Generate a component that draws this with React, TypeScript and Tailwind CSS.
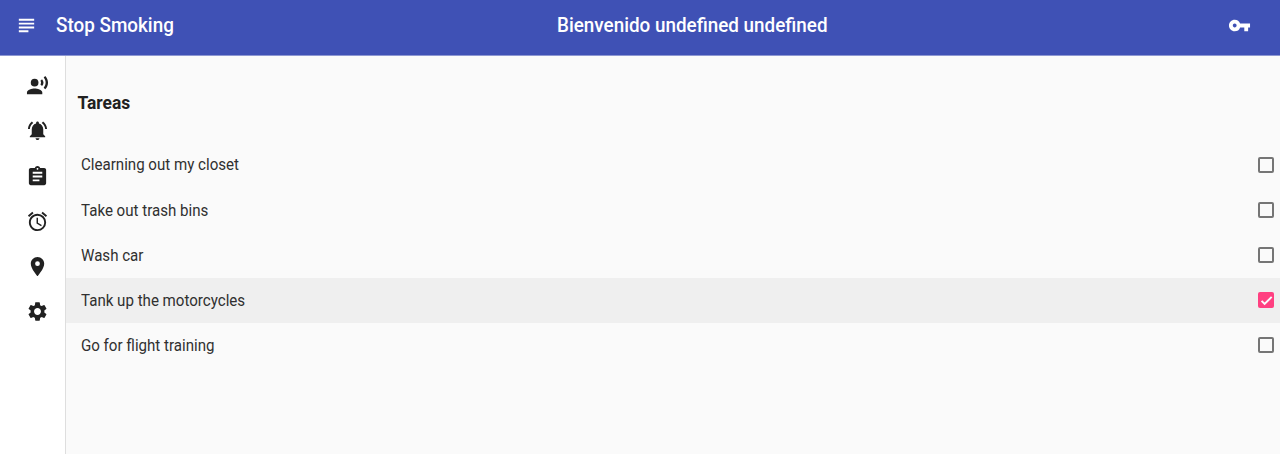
import { MdSubject, MdVpnKey, MdRecordVoiceOver, MdNotificationsActive, MdAssignment, MdAccessAlarm, MdLocationOn, MdSettings } from "react-icons/md";

const navIcons = [MdRecordVoiceOver, MdNotificationsActive, MdAssignment, MdAccessAlarm, MdLocationOn, MdSettings];

const tasks = [
  { name: "Clearning out my closet", done: false },
  { name: "Take out trash bins", done: false },
  { name: "Wash car", done: false },
  { name: "Tank up the motorcycles", done: true },
  { name: "Go for flight training", done: false },
];

function Checkbox({ checked }: { checked: boolean }) {
  return checked ? (
    <span className="flex size-4 items-center justify-center rounded-[2px] bg-[#ff4081]">
      <svg viewBox="0 0 24 24" className="size-[15px]" fill="none" stroke="#fafafa" strokeWidth="3.1">
        <path d="M4.1 12.7 9 17.6 20.3 6.3" />
      </svg>
    </span>
  ) : (
    <span className="size-4 rounded-[2px] border-2 border-[#757575]" />
  );
}

export default function App() {
  return (
    <div className="flex h-[454px] w-[1280px] flex-col overflow-hidden bg-[#fafafa] font-[Roboto,sans-serif] text-[#212121]">
      <header className="flex h-[56px] shrink-0 items-center border-b border-[#8d97d2] bg-[#3f51b5] pb-[4px] text-[19.5px] font-medium text-white">
        <MdSubject className="ml-[15px] size-[23px]" />
        <h1 className="ml-[18.4px] w-[501px] origin-left scale-x-[0.967]">Stop Smoking</h1>
        <span className="grow origin-left scale-x-[0.967]">Bienvenido undefined undefined</span>
        <MdVpnKey className="mr-[29px] size-[23px]" />
      </header>
      <div className="flex grow">
        <nav className="flex w-[66px] flex-col border-r border-[#dedede] bg-white pt-[7.2px] pl-[26.3px]">
          {navIcons.map((Icon, i) => (
            <div key={i} className="flex h-[45.2px] items-center">
              <Icon className="size-[23px]" />
            </div>
          ))}
        </nav>
        <main className="grow pt-[34.4px]">
          <h2 className="mb-[25.7px] origin-left scale-x-[0.98] pl-[11.7px] text-[17.8px] leading-[26px] font-bold">Tareas</h2>
          <ul>
            {tasks.map((t) => (
              <li key={t.name} className={`flex h-[45.2px] items-center justify-between pr-[6px] pl-[15px] text-[16px] text-[#303030] ${t.done ? "bg-[#efefef]" : ""}`}>
                <span className="origin-left scale-x-[0.943] pt-[1.6px]">{t.name}</span>
                <Checkbox checked={t.done} />
              </li>
            ))}
          </ul>
        </main>
      </div>
    </div>
  );
}
